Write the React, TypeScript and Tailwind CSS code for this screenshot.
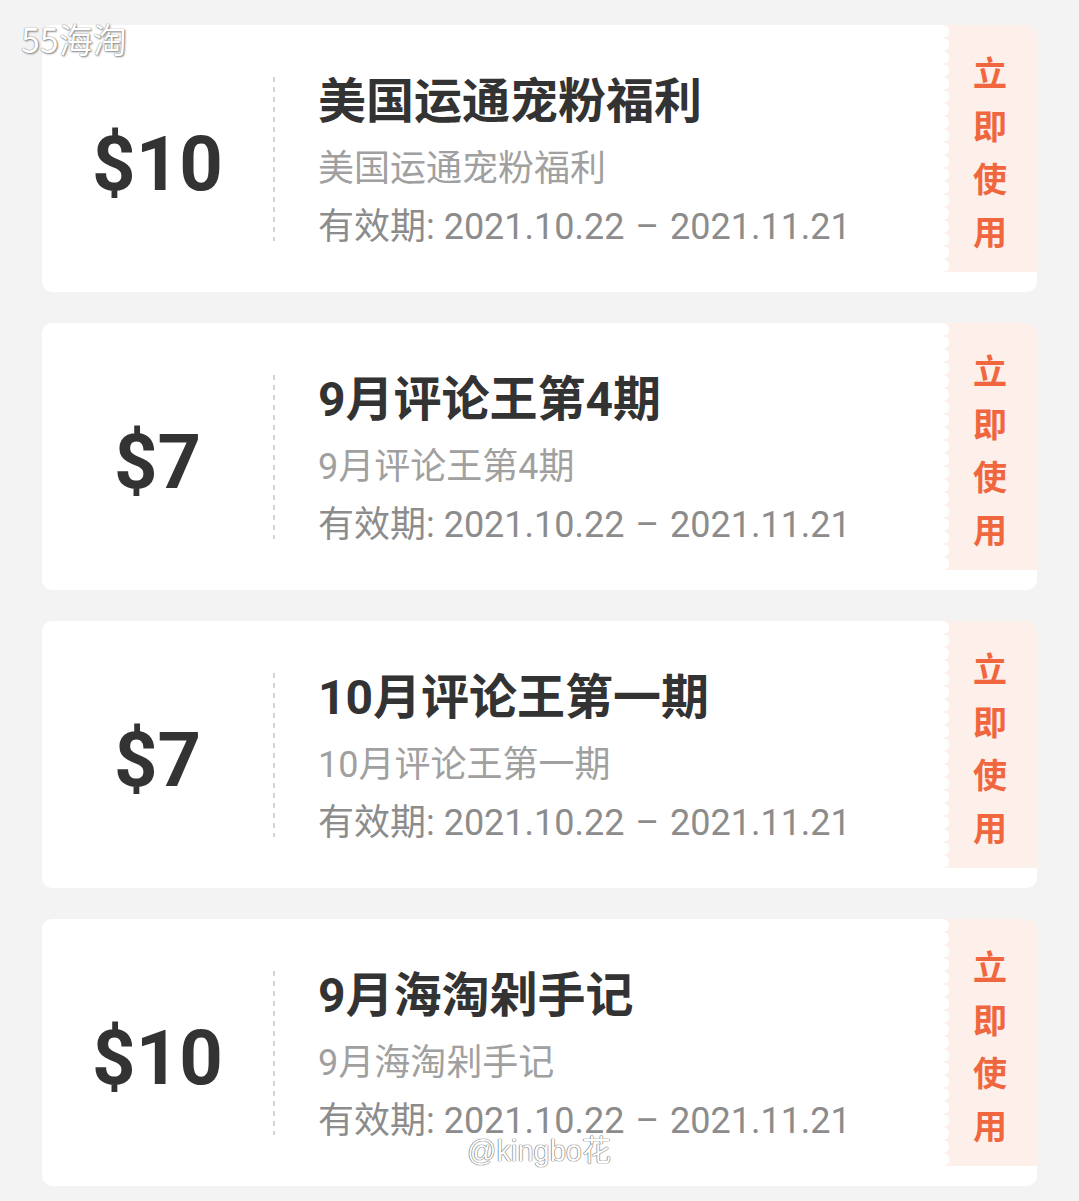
import React from 'react';

type Coupon = {
  amount: string;
  title: string;
  desc: string;
  start: string;
  end: string;
};

const coupons: Coupon[] = [
  { amount: '$10', title: '美国运通宠粉福利', desc: '美国运通宠粉福利', start: '2021.10.22', end: '2021.11.21' },
  { amount: '$7', title: '9月评论王第4期', desc: '9月评论王第4期', start: '2021.10.22', end: '2021.11.21' },
  { amount: '$7', title: '10月评论王第一期', desc: '10月评论王第一期', start: '2021.10.22', end: '2021.11.21' },
  { amount: '$10', title: '9月海淘剁手记', desc: '9月海淘剁手记', start: '2021.10.22', end: '2021.11.21' },
];

const CouponCard: React.FC<{ coupon: Coupon }> = ({ coupon }) => {
  return (
    <div className="flex h-[267px] overflow-hidden rounded-[10px] bg-white">
      <div className="flex w-[231px] items-center justify-center pt-[10px]">
        <span className="font-['Roboto',sans-serif] text-[76px] font-bold leading-none text-[#333333]">
          {coupon.amount}
        </span>
      </div>
      <div className="h-[164px] w-[2px] self-center bg-[linear-gradient(#d4d4d4_55%,transparent_55%)] bg-[length:2px_10px]" />
      <div className="flex flex-1 flex-col pl-[43px] pt-[48px] font-['Roboto','Noto_Sans_CJK_SC',sans-serif]">
        <h3 className="text-[48px] font-bold leading-[58px] text-[#333333]">{coupon.title}</h3>
        <p className="mt-[9px] text-[36px] leading-[58px] text-[#a0a0a0]">{coupon.desc}</p>
        <p className="text-[36px] leading-[58px] text-[#8c8c8c]">
          有效期: {coupon.start}
          <span className="mx-[2px]"> – </span>
          {coupon.end}
        </p>
      </div>
      <div className="flex h-[247px] w-[94px] self-start">
        <div className="w-[8px] bg-[#fdefe9] bg-[radial-gradient(circle_at_left,#ffffff_6px,transparent_6.5px)] bg-[length:8px_13px]" />
        <div className="flex flex-1 flex-col items-center bg-[#fdefe9] pr-[8px] pt-[20px] font-['Noto_Sans_CJK_SC',sans-serif] text-[34px] font-bold leading-[53px] text-[#f0673f]">
          <span>立</span>
          <span>即</span>
          <span>使</span>
          <span>用</span>
        </div>
      </div>
    </div>
  );
};

export default function App() {
  return (
    <div className="relative min-h-screen bg-[#f3f3f3] px-[42px] pb-[15px] pt-[25px]">
      <div className="flex flex-col gap-[31px]">
        {coupons.map((c, i) => (
          <CouponCard key={i} coupon={c} />
        ))}
      </div>

      {/* watermarks */}
      <div className="absolute left-[21px] top-[22px] font-['Noto_Sans_CJK_SC',sans-serif] text-[34px] font-normal leading-none text-white [text-shadow:0_0_1px_#555,1px_1px_2px_#888]">
        55海淘
      </div>
      <div className="absolute left-[467px] top-[1137px] font-['Liberation_Sans','Noto_Sans_CJK_SC',sans-serif] text-[29px] leading-none text-white [text-shadow:0_0_1px_#444,0_0_1px_#444]">
        @kingbo花
      </div>
    </div>
  );
}
